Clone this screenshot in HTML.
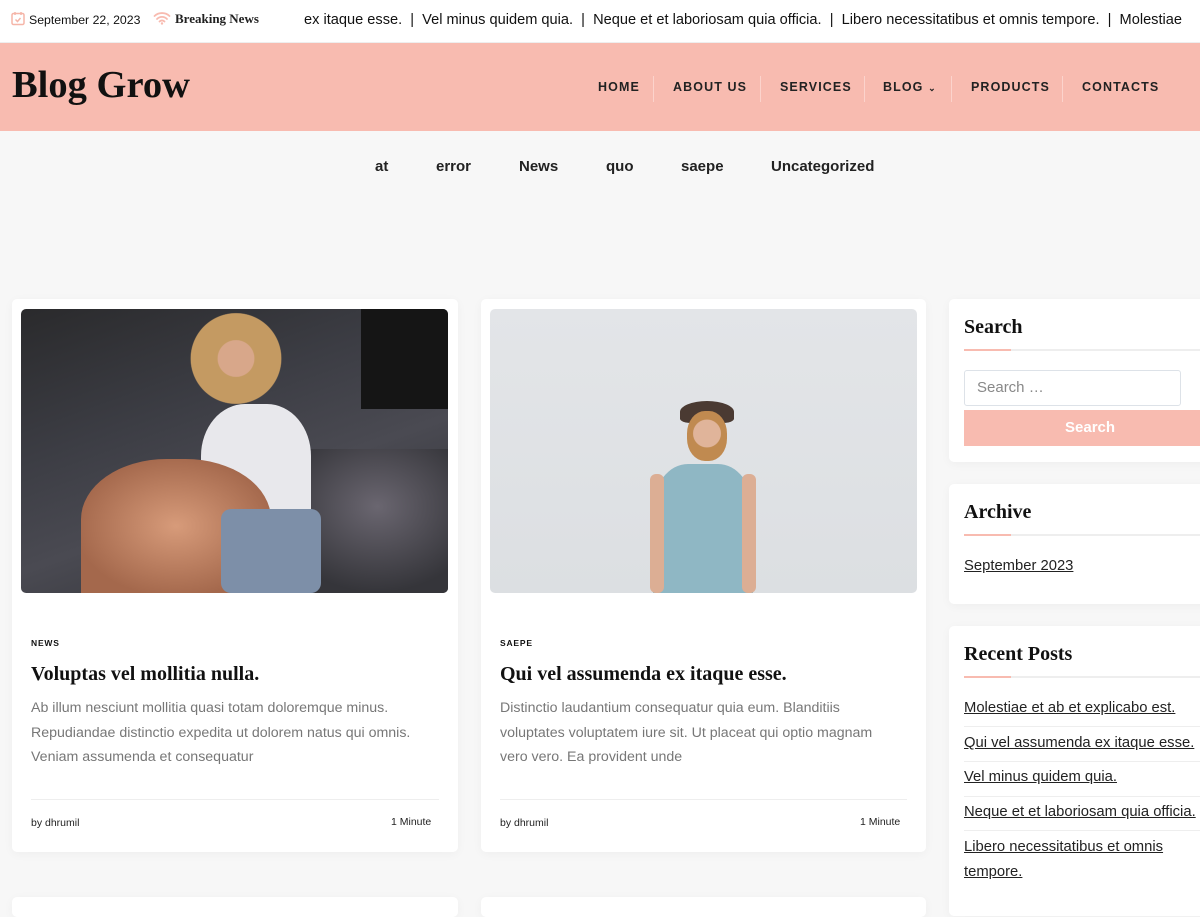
<!DOCTYPE html>
<html><head><meta charset="utf-8"><style>
*{margin:0;padding:0;box-sizing:border-box}
body{width:1200px;height:900px;overflow:hidden;background:#f7f7f7;font-family:"Liberation Sans",sans-serif;position:relative;color:#111}
.abs{position:absolute}
.top{left:0;top:0;width:1200px;height:43px;background:#fff;border-bottom:1px solid #eee}
.serif{font-family:"Liberation Serif","DejaVu Serif",serif}
.hdr{left:0;top:43px;width:1200px;height:88px;background:#f8bbb0}
.nav a{position:absolute;top:80px;font-size:12.5px;letter-spacing:1.1px;font-weight:bold;color:#222;text-decoration:none}
.sep{position:absolute;top:76px;width:1px;height:26px;background:#fcd3cc}
.cats{top:158px;font-size:15px;font-weight:bold;color:#222}
.card{background:#fff;border-radius:5px;box-shadow:0 2px 10px rgba(0,0,0,.04)}
.tag{font-size:8.5px;font-weight:bold;letter-spacing:.8px}
.title{font-family:"Liberation Serif",serif;font-weight:bold;font-size:20px;color:#111}
.ex{font-size:14.2px;line-height:24.5px;color:#777}
.meta{font-size:10.5px;color:#222}
.wt{font-family:"Liberation Serif",serif;font-weight:bold;font-size:20px}
.ul{height:2px;background:#eee}
.ul i{display:block;width:47px;height:2px;background:#f8bbb0}
.rp{font-size:14.8px;color:#222;text-decoration:underline}
.hr{height:1px;background:#eee}
</style></head><body>
<div class="abs top"></div>
<svg class="abs" style="left:11px;top:11px" width="14" height="15" viewBox="0 0 14 15"><rect x="1" y="2.5" width="12" height="11" rx="1.5" fill="none" stroke="#f5b5a8" stroke-width="1.5"/><path d="M4 1v3M10 1v3M4.5 8.5l2 2 3-3.5" stroke="#f5b5a8" stroke-width="1.5" fill="none"/></svg>
<div class="abs" style="left:29px;top:13px;font-size:12.3px">September 22, 2023</div>
<svg class="abs" style="left:153px;top:11px" width="18" height="14" viewBox="0 0 18 14"><path d="M1.5 5a11 11 0 0 1 15 0M4 8a7 7 0 0 1 10 0M6.5 10.5a3.5 3.5 0 0 1 5 0" stroke="#f8bbb0" stroke-width="1.8" fill="none" stroke-linecap="round"/><circle cx="9" cy="12.5" r="1.2" fill="#f8bbb0"/></svg>
<div class="abs serif" style="left:175px;top:11px;font-size:13px;font-weight:bold;color:#222">Breaking News</div>
<div class="abs" style="left:304px;top:12px;font-size:14.6px;white-space:nowrap;color:#111">ex itaque esse. &nbsp;| &nbsp;Vel minus quidem quia. &nbsp;| &nbsp;Neque et et laboriosam quia officia. &nbsp;| &nbsp;Libero necessitatibus et omnis tempore. &nbsp;| &nbsp;Molestiae</div>
<div class="abs hdr"></div>
<div class="abs serif" style="left:12px;top:63px;font-size:38.5px;font-weight:bold;color:#111">Blog Grow</div>
<div class="nav">
<a style="left:598px">HOME</a><span class="sep" style="left:653px"></span>
<a style="left:673px">ABOUT US</a><span class="sep" style="left:760px"></span>
<a style="left:780px">SERVICES</a><span class="sep" style="left:864px"></span>
<a style="left:883px">BLOG <span style="font-size:9px">&#8964;</span></a><span class="sep" style="left:951px"></span>
<a style="left:971px">PRODUCTS</a><span class="sep" style="left:1062px"></span>
<a style="left:1082px">CONTACTS</a>
</div>
<div class="abs cats" style="left:375px">at</div>
<div class="abs cats" style="left:436px">error</div>
<div class="abs cats" style="left:519px">News</div>
<div class="abs cats" style="left:606px">quo</div>
<div class="abs cats" style="left:681px">saepe</div>
<div class="abs cats" style="left:771px">Uncategorized</div>

<div class="abs card" style="left:12px;top:299px;width:446px;height:553px"></div>
<div class="abs" style="left:21px;top:309px;width:427px;height:284px;border-radius:5px;overflow:hidden;background:linear-gradient(160deg,#2a2a2c 0%,#3c3d44 35%,#4a4a52 60%,#2b2c30 100%)">
 <div class="abs" style="left:250px;top:140px;width:177px;height:144px;background:radial-gradient(ellipse at 60% 40%,#6a6670,#35353a 70%)"></div>
 <div class="abs" style="left:340px;top:0;width:87px;height:100px;background:#151515"></div>
 <div class="abs" style="left:160px;top:0;width:110px;height:110px;border-radius:50%;background:radial-gradient(circle at 50% 45%,#d8a78a 0 22%,#c49a62 23% 55%,transparent 56%)"></div>
 <div class="abs" style="left:180px;top:95px;width:110px;height:130px;border-radius:40% 40% 10% 10%;background:#e8e8ec"></div>
 <div class="abs" style="left:60px;top:150px;width:190px;height:134px;border-radius:45% 45% 0 0;background:radial-gradient(ellipse at 50% 50%,#d79b7a,#a4684c 75%)"></div>
 <div class="abs" style="left:200px;top:200px;width:100px;height:84px;background:#7d8fa8;border-radius:10px"></div>
</div>
<div class="abs tag" style="left:31px;top:638px">NEWS</div>
<div class="abs title" style="left:31px;top:663px">Voluptas vel mollitia nulla.</div>
<div class="abs ex" style="left:31px;top:696px;width:415px">Ab illum nesciunt mollitia quasi totam doloremque minus. Repudiandae distinctio expedita ut dolorem natus qui omnis. Veniam assumenda et consequatur</div>
<div class="abs hr" style="left:31px;top:799px;width:408px"></div>
<div class="abs meta" style="left:31px;top:817px">by dhrumil</div>
<div class="abs meta" style="left:391px;top:816px">1 Minute</div>

<div class="abs card" style="left:481px;top:299px;width:445px;height:553px"></div>
<div class="abs" style="left:490px;top:309px;width:427px;height:284px;border-radius:5px;overflow:hidden;background:linear-gradient(180deg,#e3e5e8,#dcdfe2)">
 <div class="abs" style="left:190px;top:92px;width:54px;height:22px;border-radius:50% 50% 20% 20%;background:#4a3a32"></div>
 <div class="abs" style="left:197px;top:102px;width:40px;height:50px;border-radius:45%;background:radial-gradient(circle at 50% 45%,#e0b49a 0 40%,#c08a50 42%)"></div>
 <div class="abs" style="left:163px;top:155px;width:100px;height:129px;border-radius:35% 35% 0 0;background:#8fb7c4"></div>
 <div class="abs" style="left:160px;top:165px;width:14px;height:119px;background:#dcae94;border-radius:6px"></div>
 <div class="abs" style="left:252px;top:165px;width:14px;height:119px;background:#dcae94;border-radius:6px"></div>
</div>
<div class="abs tag" style="left:500px;top:638px">SAEPE</div>
<div class="abs title" style="left:500px;top:663px">Qui vel assumenda ex itaque esse.</div>
<div class="abs ex" style="left:500px;top:696px;width:398px">Distinctio laudantium consequatur quia eum. Blanditiis voluptates voluptatem iure sit. Ut placeat qui optio magnam vero vero. Ea provident unde</div>
<div class="abs hr" style="left:500px;top:799px;width:407px"></div>
<div class="abs meta" style="left:500px;top:817px">by dhrumil</div>
<div class="abs meta" style="left:860px;top:816px">1 Minute</div>

<div class="abs card" style="left:12px;top:897px;width:446px;height:20px"></div>
<div class="abs card" style="left:481px;top:897px;width:445px;height:20px"></div>

<div class="abs card" style="left:949px;top:299px;width:270px;height:163px"></div>
<div class="abs wt" style="left:964px;top:316px">Search</div>
<div class="abs ul" style="left:964px;top:349px;width:250px"><i></i></div>
<div class="abs" style="left:964px;top:370px;width:217px;height:36px;border:1px solid #dde2e8;border-radius:3px;background:#fff;font-size:15px;color:#888;padding:8px 12px">Search …</div>
<div class="abs" style="left:964px;top:410px;width:250px;height:36px;background:#f8bbb0;color:#fff;font-size:15px;font-weight:bold;line-height:36px"><span style="position:absolute;left:101px">Search</span></div>

<div class="abs card" style="left:949px;top:484px;width:270px;height:120px"></div>
<div class="abs wt" style="left:964px;top:501px">Archive</div>
<div class="abs ul" style="left:964px;top:534px;width:250px"><i></i></div>
<div class="abs rp" style="left:964px;top:558px">September 2023</div>

<div class="abs card" style="left:949px;top:626px;width:270px;height:290px"></div>
<div class="abs wt" style="left:964px;top:643px">Recent Posts</div>
<div class="abs ul" style="left:964px;top:676px;width:250px"><i></i></div>
<div class="abs rp" style="left:964px;top:700px">Molestiae et ab et explicabo est.</div>
<div class="abs hr" style="left:964px;top:726px;width:250px"></div>
<div class="abs rp" style="left:964px;top:735px;white-space:nowrap">Qui vel assumenda ex itaque esse.</div>
<div class="abs hr" style="left:964px;top:761px;width:250px"></div>
<div class="abs rp" style="left:964px;top:769px">Vel minus quidem quia.</div>
<div class="abs hr" style="left:964px;top:796px;width:250px"></div>
<div class="abs rp" style="left:964px;top:804px;white-space:nowrap">Neque et et laboriosam quia officia.</div>
<div class="abs hr" style="left:964px;top:830px;width:250px"></div>
<div class="abs rp" style="left:964px;top:839px;line-height:24.5px;width:220px;margin-top:-4px">Libero necessitatibus et omnis tempore.</div>
</body></html>
